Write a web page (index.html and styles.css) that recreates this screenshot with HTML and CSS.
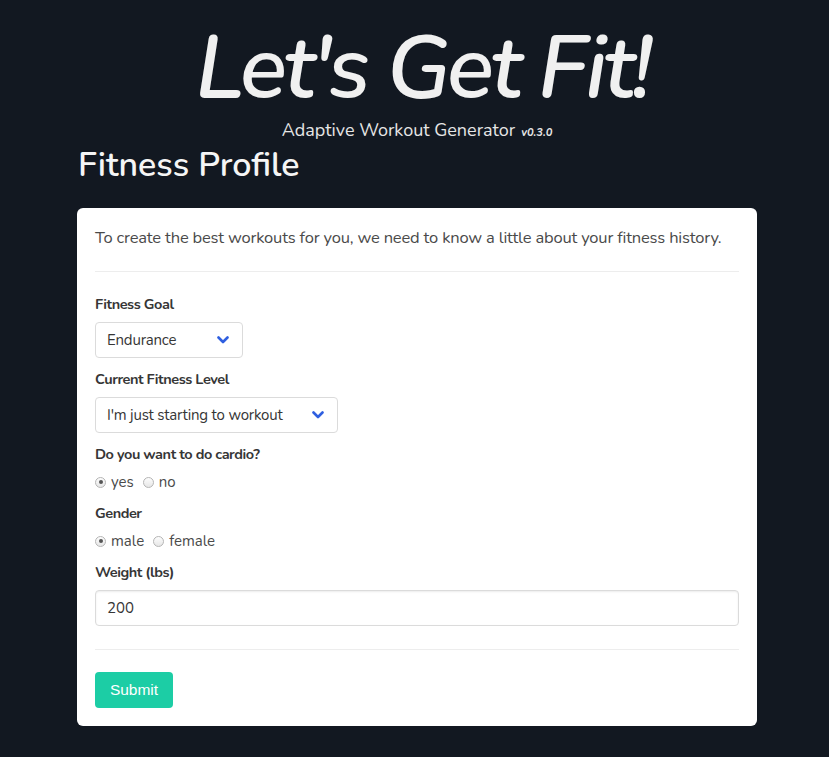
FILE: index.html
```html
<!DOCTYPE html>
<html lang="en">
<head>
<meta charset="utf-8">
<title>Let's Get Fit!</title>
<link rel="stylesheet" href="styles.css">
</head>
<body>
<div class="page">
  <header class="hero">
    <h1 class="brand">Let's Get Fit!</h1>
    <p class="tagline"><span>Adaptive Workout Generator</span><em class="version">v0.3.0</em></p>
  </header>
  <h2 class="section-title">Fitness Profile</h2>
  <form class="card">
    <p class="intro">To create the best workouts for you, we need to know a little about your fitness history.</p>
    <hr class="divider">
    <div class="field">
      <label class="label">Fitness Goal</label>
      <div class="select select-goal">
        <span class="select-value">Endurance</span>
        <svg class="chevron" viewBox="0 0 12 8" width="12" height="8"><path d="M1.5 1.5 L6 6 L10.5 1.5" fill="none" stroke="#2f5fe0" stroke-width="2.6" stroke-linecap="round" stroke-linejoin="round"/></svg>
      </div>
    </div>
    <div class="field">
      <label class="label">Current Fitness Level</label>
      <div class="select select-level">
        <span class="select-value">I'm just starting to workout</span>
        <svg class="chevron" viewBox="0 0 12 8" width="12" height="8"><path d="M1.5 1.5 L6 6 L10.5 1.5" fill="none" stroke="#2f5fe0" stroke-width="2.6" stroke-linecap="round" stroke-linejoin="round"/></svg>
      </div>
    </div>
    <div class="field">
      <label class="label">Do you want to do cardio?</label>
      <div class="radios">
        <span class="radio"><span class="dot checked"></span>yes</span>
        <span class="radio"><span class="dot"></span>no</span>
      </div>
    </div>
    <div class="field">
      <label class="label">Gender</label>
      <div class="radios">
        <span class="radio"><span class="dot checked"></span>male</span>
        <span class="radio"><span class="dot"></span>female</span>
      </div>
    </div>
    <div class="field">
      <label class="label">Weight (lbs)</label>
      <div class="input">200</div>
    </div>
    <hr class="divider divider-bottom">
    <button type="button" class="button">Submit</button>
  </form>
</div>
</body>
</html>
```
FILE: styles.css
```css
* { box-sizing: border-box; }
html, body { margin: 0; padding: 0; }
body {
  background: #121821;
  font-family: "Nunito", "Lato", "Noto Sans", sans-serif;
  color: #363636;
  height: 757px;
  overflow: hidden;
}
.page {
  width: 680px;
  margin-left: 77px;
  padding-top: 18px;
}
.hero { text-align: center; }
.brand {
  margin: 0;
  font-size: 88px;
  line-height: 100px;
  font-style: italic;
  font-weight: 600;
  color: #f0f0f0;
  letter-spacing: -3.8px;
  padding-left: 10px;
}
.tagline {
  margin: 0;
  display: flex;
  justify-content: center;
  align-items: baseline;
  gap: 6px;
  font-size: 18px;
  line-height: 24px;
  color: #e6e6e6;
}
.version { font-size: 11px; font-weight: 700; }
.section-title {
  margin: 0 0 0 1px;
  font-size: 34px;
  line-height: 40px;
  font-weight: 600;
  color: #f5f5f5;
}
.card {
  margin-top: 23px;
  background: #fff;
  border-radius: 6px;
  padding: 20px 18px 17px 18px;
  height: 518px;
}
.intro {
  margin: 0;
  font-size: 16.5px;
  line-height: 20px;
  letter-spacing: -0.18px;
  color: #4a4a4a;
  white-space: nowrap;
}
.divider {
  border: 0;
  border-top: 1px solid #ededed;
  margin: 23px 0 22px;
}
.divider-bottom { margin: 23px 0 22px; }
.field { margin-bottom: 11px; }
.label {
  display: block;
  font-size: 14.5px;
  font-weight: 700;
  letter-spacing: -0.45px;
  line-height: 20px;
  color: #363636;
  margin-bottom: 8px;
}
.select {
  display: inline-flex;
  align-items: center;
  justify-content: space-between;
  height: 36px;
  border: 1px solid #dbdbdb;
  border-radius: 4px;
  padding: 0 13px 0 11px;
  font-size: 15px;
  letter-spacing: -0.2px;
  color: #363636;
}
.select-goal { width: 148px; }
.select-level { width: 243px; }
.chevron { display: block; }
.radios {
  display: flex;
  gap: 9px;
  height: 20px;
  align-items: center;
  font-size: 15px;
  color: #4a4a4a;
  margin-bottom: 2px;
}
.radio { display: inline-flex; align-items: center; gap: 5px; }
.dot {
  width: 11px;
  height: 11px;
  border-radius: 50%;
  border: 1px solid #b5b5b5;
  background: linear-gradient(#fdfdfd, #e6e6e6);
  position: relative;
}
.dot.checked::after {
  content: "";
  position: absolute;
  left: 2.5px; top: 2.5px;
  width: 4px; height: 4px;
  border-radius: 50%;
  background: #555;
}
.input {
  height: 36px;
  border: 1px solid #dbdbdb;
  border-radius: 4px;
  padding: 0 11px;
  display: flex;
  align-items: center;
  font-size: 15px;
  color: #363636;
  box-shadow: inset 0 1px 2px rgba(10,10,10,0.08);
}
.button {
  background: #1ccda5;
  color: #fff;
  border: 0;
  border-radius: 4px;
  height: 36px;
  width: 78px;
  font-family: "Liberation Sans", Arial, sans-serif;
  font-size: 15.5px;
  cursor: pointer;
}
```
